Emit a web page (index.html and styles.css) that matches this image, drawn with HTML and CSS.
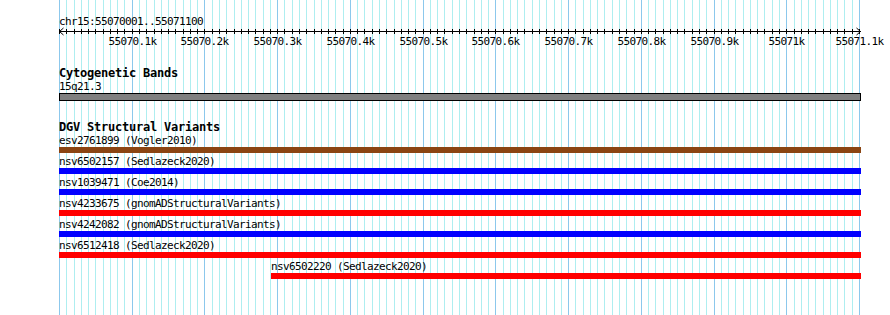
FILE: index.html
```html
<!DOCTYPE html>
<html lang="en">
<head>
  <meta charset="UTF-8">
  <title>chr15:55070001..55071100</title>
  <link rel="stylesheet" href="styles.css">
</head>
<body>
  <div class="browser">
    <!-- grid lines behind all tracks, filled by the script -->
    <svg class="grid" id="grid" width="890" height="315"></svg>

    <div class="panel">
      <svg class="ruler" id="ruler" width="890" height="67">
        <text class="ruler-title" x="59" y="25">chr15:55070001..55071100</text>
      </svg>

      <section class="track cyto">
        <h2 class="track-title">Cytogenetic Bands</h2>
        <div class="feature">
          <div class="feature-label">15q21.3</div>
          <div class="band"></div>
        </div>
      </section>

      <section class="track dgv">
        <h2 class="track-title">DGV Structural Variants</h2>
        <div class="feature">
          <div class="feature-label">esv2761899 (Vogler2010)</div>
          <div class="bar bar-gain"></div>
        </div>
        <div class="feature">
          <div class="feature-label">nsv6502157 (Sedlazeck2020)</div>
          <div class="bar bar-loss"></div>
        </div>
        <div class="feature">
          <div class="feature-label">nsv1039471 (Coe2014)</div>
          <div class="bar bar-loss"></div>
        </div>
        <div class="feature">
          <div class="feature-label">nsv4233675 (gnomADStructuralVariants)</div>
          <div class="bar bar-dup"></div>
        </div>
        <div class="feature">
          <div class="feature-label">nsv4242082 (gnomADStructuralVariants)</div>
          <div class="bar bar-loss"></div>
        </div>
        <div class="feature">
          <div class="feature-label">nsv6512418 (Sedlazeck2020)</div>
          <div class="bar bar-dup"></div>
        </div>
        <div class="feature" style="margin-left: 212px;">
          <div class="feature-label">nsv6502220 (Sedlazeck2020)</div>
          <div class="bar bar-dup"></div>
        </div>
      </section>
    </div>
  </div>

  <script>
    // region shown: 55070000 .. 55071100, 800px wide starting at x=59
    const regionStart = 55070000;
    const regionLength = 1100;
    const left = 59;
    const pxPerBp = 800 / regionLength;
    const svgNS = "http://www.w3.org/2000/svg";

    function line(svg, x1, y1, x2, y2, cls) {
      const l = document.createElementNS(svgNS, "line");
      l.setAttribute("x1", x1);
      l.setAttribute("y1", y1);
      l.setAttribute("x2", x2);
      l.setAttribute("y2", y2);
      l.setAttribute("class", cls);
      svg.appendChild(l);
    }

    const grid = document.getElementById("grid");
    const ruler = document.getElementById("ruler");

    // axis with arrow heads
    line(ruler, left, 31.5, 861, 31.5, "axis");
    line(ruler, left + 0.5, 31.5, left + 4.5, 28, "axis");
    line(ruler, left + 0.5, 31.5, left + 4.5, 35, "axis");
    line(ruler, 860.5, 31.5, 856.5, 28, "axis");
    line(ruler, 860.5, 31.5, 856.5, 35, "axis");

    for (let bp = 0; bp <= regionLength; bp += 10) {
      const x = Math.round(left + bp * pxPerBp) + 0.5;
      const major = bp % 100 === 0;

      line(grid, x, 0, x, 315, major ? "grid-major" : "grid-minor");
      line(ruler, x, 29, x, 34, "tick");

      if (major && bp > 0) {
        const label = document.createElementNS(svgNS, "text");
        label.setAttribute("x", x);
        label.setAttribute("y", 45);
        label.setAttribute("class", "tick-label");
        label.textContent = ((regionStart + bp) / 1000) + "k";
        ruler.appendChild(label);
      }
    }
  </script>
</body>
</html>
```

FILE: styles.css
```css
body {
    margin: 0;
    background: #ffffff;
    font-family: 'DejaVu Sans Mono', 'Liberation Mono', monospace;
    color: #000000;
}

.browser {
    display: grid;
    width: 890px;
    height: 315px;
    overflow: hidden;
}

.grid,
.panel {
    grid-area: 1 / 1;
}

.grid line {
    shape-rendering: crispEdges;
    stroke-width: 1;
}

.grid-minor {
    stroke: #aeeef0;
}

.grid-major {
    stroke: #8cc8ec;
}

.ruler {
    display: block;
}

.ruler line {
    stroke: #000000;
    stroke-width: 1;
}

.ruler .tick {
    shape-rendering: crispEdges;
}

.ruler-title,
.tick-label {
    font-family: 'DejaVu Sans Mono', 'Liberation Mono', monospace;
    font-size: 11px;
    letter-spacing: -0.62px;
    fill: #000000;
}

.tick-label {
    text-anchor: middle;
}

.track {
    margin-left: 59px;
    width: 802px;
}

.dgv {
    margin-top: 20px;
}

.track-title {
    margin: 0;
    font-size: 12px;
    letter-spacing: -0.22px;
    font-weight: bold;
    line-height: 13px;
    white-space: nowrap;
}

.feature-label {
    font-size: 11px;
    letter-spacing: -0.62px;
    line-height: 13px;
    white-space: nowrap;
}

.band {
    height: 6px;
    background: #808080;
    border: 1px solid #000000;
}

.bar {
    height: 6px;
    margin-bottom: 2px;
}

.bar-gain {
    background: #8b4513;
}

.bar-loss {
    background: #0000ff;
}

.bar-dup {
    background: #ff0000;
}
```
